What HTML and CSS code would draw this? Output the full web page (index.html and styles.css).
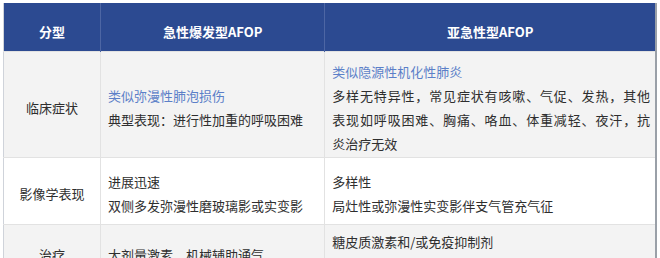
FILE: index.html
```html
<!DOCTYPE html>
<html lang="zh-CN">
<head>
<meta charset="utf-8">
<link rel="stylesheet" href="styles.css">
</head>
<body>
<div class="frame">
<table class="tbl">
  <colgroup>
    <col class="c1"><col class="c2"><col class="c3">
  </colgroup>
  <thead>
    <tr class="head">
      <th>分型</th>
      <th>急性爆发型AFOP</th>
      <th>亚急性型AFOP</th>
    </tr>
  </thead>
  <tbody>
    <tr class="r1 grey">
      <td class="label">临床症状</td>
      <td><span class="blue">类似弥漫性肺泡损伤</span><br>典型表现：进行性加重的呼吸困难</td>
      <td><span class="blue">类似隐源性机化性肺炎</span><span class="jl">多样无特异性，常见症状有咳嗽、气促、发热，其他</span><span class="jl">表现如呼吸困难、胸痛、咯血、体重减轻、夜汗，抗</span>炎治疗无效</td>
    </tr>
    <tr class="r2">
      <td class="label">影像学表现</td>
      <td>进展迅速<br>双侧多发弥漫性磨玻璃影或实变影</td>
      <td>多样性<br>局灶性或弥漫性实变影伴支气管充气征</td>
    </tr>
    <tr class="r3 grey">
      <td class="label">治疗</td>
      <td>大剂量激素、机械辅助通气</td>
      <td class="top">糖皮质激素和/或免疫抑制剂<br>预后较好</td>
    </tr>
  </tbody>
</table>
</div>
</body>
</html>
```
FILE: styles.css
```css
html, body {
  margin: 0;
  padding: 0;
  background: #ffffff;
}
.frame {
  padding: 3px 0 0 3px;
}
.tbl {
  border-collapse: collapse;
  table-layout: fixed;
  width: 654px;
  font-family: "Noto Sans CJK SC", "Noto Sans", sans-serif;
  font-size: 13px;
  line-height: 24px;
  color: #2e2e2e;
  border-left: 1px solid #cfd3da;
  border-right: 2px solid #9aa0a8;
}
.c1 { width: 97px; }
.c2 { width: 224px; }
.c3 { width: 331px; }
.head th {
  background: #2c4a91;
  color: #ffffff;
  font-weight: 700;
  font-size: 13px;
  height: 48px;
  padding: 10px 0 0 0;
  box-sizing: border-box;
  text-align: center;
  vertical-align: middle;
  border-left: 1px solid #4d66a4;
}
.head th:first-child { border-left: none; }
td {
  padding: 8px 5px 1px 7px;
  vertical-align: middle;
  text-align: left;
  border-left: 1px solid #e2e2e2;
  border-top: 1px solid #e2e2e2;
}
td:first-child { border-left: none; }
td.label {
  text-align: center;
  padding-left: 0;
  padding-right: 0;
}
td.top {
  vertical-align: top;
  padding-top: 5px;
}
.grey td { background: #f3f3f3; }
.r1 td { height: 95px; }
.r2 td { height: 57px; }
.r3 td { height: 60px; }
.r3 td.label, .r3 td:nth-child(2) { padding-top: 0; padding-bottom: 14px; }
.blue {
  display: block;
  color: #5b7fc8;
}
.r1 td:nth-child(2) .blue { display: inline; }
.jl {
  display: block;
  text-align: justify;
  text-align-last: justify;
}
```
